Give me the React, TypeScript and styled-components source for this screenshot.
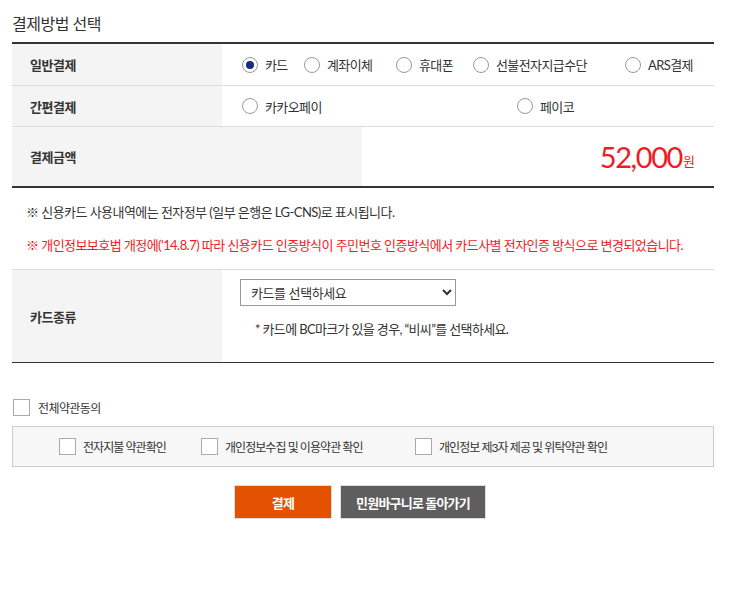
import { useState } from 'react'
import styled, { createGlobalStyle } from 'styled-components'

const GlobalStyle = createGlobalStyle`
  html, body {
    margin: 0;
    padding: 0;
    background: #fff;
  }
  body {
    font-family: 'Lato', 'Noto Sans CJK KR', sans-serif;
    color: #333;
    font-size: 13px;
  }
`

const Page = styled.div`
  width: 702px;
  padding: 12px 12px 40px;
`

const Title = styled.h2`
  margin: 0;
  height: 30px;
  font-size: 16px;
  font-weight: 400;
  line-height: 24px;
  color: #333;
  letter-spacing: -0.5px;
`

const InfoTable = styled.div`
  border-top: 2px solid #333;
  border-bottom: 2px solid #333;
`

const Row = styled.div<{ $height: number; $last?: boolean }>`
  display: flex;
  height: ${(p) => p.$height}px;
  border-bottom: ${(p) => (p.$last ? 'none' : '1px solid #ddd')};
`

const HeadCell = styled.div<{ $width: number }>`
  width: ${(p) => p.$width}px;
  flex: none;
  background: #f4f4f4;
  display: flex;
  align-items: center;
  padding-left: 18px;
  box-sizing: border-box;
  font-weight: 700;
  font-size: 13px;
  color: #333;
  letter-spacing: -0.5px;
`

const BodyCell = styled.div`
  flex: 1;
  display: flex;
  align-items: center;
  padding-left: 20px;
`

const RadioGrid = styled.div<{ $cols: string }>`
  display: grid;
  grid-template-columns: ${(p) => p.$cols};
  align-items: center;
`

const RadioLabel = styled.label`
  display: flex;
  align-items: center;
  gap: 7px;
  cursor: pointer;
  font-size: 13px;
  color: #333;
  letter-spacing: -0.6px;
  white-space: nowrap;
`

const RadioInput = styled.input`
  appearance: none;
  margin: 0;
  width: 16px;
  height: 16px;
  border: 1px solid #999;
  border-radius: 50%;
  background: #fff;
  box-sizing: border-box;
  display: grid;
  place-items: center;
  &:checked::after {
    content: '';
    width: 8px;
    height: 8px;
    border-radius: 50%;
    background: #1b2a80;
  }
`

const AmountCell = styled.div`
  flex: 1;
  display: flex;
  align-items: center;
  justify-content: flex-end;
  padding-right: 19px;
  color: #ee1c25;
`

const Amount = styled.span`
  font-family: 'Lato', sans-serif;
  font-size: 29px;
  letter-spacing: -1.4px;
`

const Won = styled.span`
  font-size: 13px;
  margin-left: 1px;
  margin-top: 8px;
`

const Notices = styled.div`
  padding: 15px 0 0 14px;
  border-bottom: 1px solid #ddd;
`

const Notice = styled.p<{ $red?: boolean }>`
  margin: 0;
  height: 33px;
  line-height: 18px;
  font-size: 13px;
  letter-spacing: -0.55px;
  color: ${(p) => (p.$red ? '#ee1c25' : '#333')};
`

const CardTable = styled.div`
  border-bottom: 1px solid #333;
`

const CardBody = styled.div`
  flex: 1;
  padding: 9px 0 0 18px;
`

const Select = styled.select`
  width: 216px;
  height: 27px;
  border: 1px solid #999;
  border-radius: 0;
  background: #fff;
  font-family: 'Lato', 'Noto Sans CJK KR', sans-serif;
  font-size: 13px;
  letter-spacing: -0.4px;
  color: #333;
  padding: 0 6px;
`

const CardHint = styled.p`
  margin: 13px 0 0 15px;
  font-size: 13px;
  letter-spacing: -0.65px;
  color: #333;
`

const AgreeAll = styled.label`
  display: flex;
  align-items: center;
  gap: 8px;
  margin: 36px 0 10px 1px;
  font-size: 12px;
  letter-spacing: -0.6px;
  color: #333;
`

const Check = styled.input`
  appearance: none;
  margin: 0;
  width: 17px;
  height: 17px;
  border: 1px solid #aaa;
  background: #fff;
  box-sizing: border-box;
  flex: none;
`

const TermsBox = styled.div`
  display: grid;
  grid-template-columns: 142px 214px auto;
  align-items: center;
  height: 39px;
  border: 1px solid #ccc;
  background: #f7f7f7;
  padding-left: 46px;
`

const TermLabel = styled.label`
  display: flex;
  align-items: center;
  gap: 7px;
  font-size: 12px;
  letter-spacing: -0.95px;
  color: #333;
  white-space: nowrap;
`

const Buttons = styled.div`
  display: flex;
  justify-content: center;
  gap: 8px;
  margin-top: 18px;
  padding-right: 6px;
`

const Button = styled.button<{ $variant: 'primary' | 'dark' }>`
  height: 34px;
  width: ${(p) => (p.$variant === 'primary' ? 98 : 146)}px;
  border: 1px solid #ddd;
  background: ${(p) => (p.$variant === 'primary' ? '#e35200' : '#5e5e5e')};
  color: #fff;
  font-family: 'Noto Sans CJK KR', sans-serif;
  font-size: 13px;
  font-weight: 700;
  letter-spacing: -0.8px;
  cursor: pointer;
`

const generalMethods = ['카드', '계좌이체', '휴대폰', '선불전자지급수단', 'ARS결제']
const easyMethods = ['카카오페이', '페이코']
const terms = ['전자지불 약관확인', '개인정보수집 및 이용약관 확인', '개인정보 제3자 제공 및 위탁약관 확인']

export default function App() {
  const [method, setMethod] = useState('카드')

  return (
    <>
      <GlobalStyle />
      <Page>
        <Title>결제방법 선택</Title>

        <InfoTable>
          <Row $height={41}>
            <HeadCell $width={210}>일반결제</HeadCell>
            <BodyCell>
              <RadioGrid $cols="62px 92px 77px 152px auto">
                {generalMethods.map((m) => (
                  <RadioLabel key={m}>
                    <RadioInput
                      type="radio"
                      name="method"
                      checked={method === m}
                      onChange={() => setMethod(m)}
                    />
                    {m}
                  </RadioLabel>
                ))}
              </RadioGrid>
            </BodyCell>
          </Row>
          <Row $height={40}>
            <HeadCell $width={210}>간편결제</HeadCell>
            <BodyCell>
              <RadioGrid $cols="275px auto">
                {easyMethods.map((m) => (
                  <RadioLabel key={m}>
                    <RadioInput
                      type="radio"
                      name="method"
                      checked={method === m}
                      onChange={() => setMethod(m)}
                    />
                    {m}
                  </RadioLabel>
                ))}
              </RadioGrid>
            </BodyCell>
          </Row>
          <Row $height={59} $last>
            <HeadCell $width={350}>결제금액</HeadCell>
            <AmountCell>
              <Amount>52,000</Amount>
              <Won>원</Won>
            </AmountCell>
          </Row>
        </InfoTable>

        <Notices>
          <Notice>※ 신용카드 사용내역에는 전자정부 (일부 은행은 LG-CNS)로 표시됩니다.</Notice>
          <Notice $red>
            ※ 개인정보보호법 개정에('14.8.7) 따라 신용카드 인증방식이 주민번호 인증방식에서 카드사별 전자인증 방식으로 변경되었습니다.
          </Notice>
        </Notices>

        <CardTable>
          <Row $height={92} $last>
            <HeadCell $width={210}>카드종류</HeadCell>
            <CardBody>
              <Select defaultValue="">
                <option value="">카드를 선택하세요</option>
                <option value="bc">비씨</option>
                <option value="kb">국민</option>
                <option value="sh">신한</option>
              </Select>
              <CardHint>* 카드에 BC마크가 있을 경우, “비씨”를 선택하세요.</CardHint>
            </CardBody>
          </Row>
        </CardTable>

        <AgreeAll>
          <Check type="checkbox" />
          전체약관동의
        </AgreeAll>

        <TermsBox>
          {terms.map((t) => (
            <TermLabel key={t}>
              <Check type="checkbox" />
              {t}
            </TermLabel>
          ))}
        </TermsBox>

        <Buttons>
          <Button $variant="primary">결제</Button>
          <Button $variant="dark">민원바구니로 돌아가기</Button>
        </Buttons>
      </Page>
    </>
  )
}
